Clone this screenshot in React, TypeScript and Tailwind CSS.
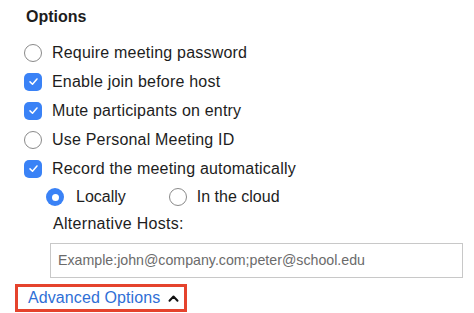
import React from 'react'

const font = { fontFamily: '"Liberation Sans", Arial, sans-serif' }

function Check({ on }: { on: boolean }) {
  return on ? (
    <span className="flex h-[18px] w-[18px] shrink-0 items-center justify-center rounded-[5px] bg-[#3a82f6]">
      <svg width="11" height="11" viewBox="0 0 12 12" fill="none">
        <path d="M2.2 6.4 4.9 9 9.8 3.2" stroke="white" strokeWidth="1.6" strokeLinecap="round" strokeLinejoin="round" />
      </svg>
    </span>
  ) : (
    <span className="block h-[18px] w-[18px] shrink-0 rounded-full border border-[#8a8a8a] bg-white" />
  )
}

function Radio({ on }: { on: boolean }) {
  return on ? (
    <span className="flex h-[18px] w-[18px] shrink-0 items-center justify-center rounded-full bg-[#3a82f6]">
      <span className="block h-[7px] w-[7px] rounded-full bg-white" />
    </span>
  ) : (
    <span className="block h-[18px] w-[18px] shrink-0 rounded-full border border-[#8a8a8a] bg-white" />
  )
}

const options = [
  { label: 'Require meeting password', on: false },
  { label: 'Enable join before host', on: true },
  { label: 'Mute participants on entry', on: true },
  { label: 'Use Personal Meeting ID', on: false },
  { label: 'Record the meeting automatically', on: true },
]

export default function App() {
  return (
    <div className="h-[313px] w-[474px] overflow-hidden bg-white pl-[24px] pt-[7px] text-[#1d1d1d]" style={font}>
      <div className="pl-[2px] text-[16px] font-bold leading-[20px]">Options</div>
      <div className="mt-[11px] flex flex-col">
        {options.map((o) => (
          <div key={o.label} className="flex h-[29px] items-center gap-[10px]">
            <Check on={o.on} />
            <span className="text-[16px] tracking-[0.2px]">{o.label}</span>
          </div>
        ))}
        <div className="flex h-[28px] items-center pl-[22px] text-[16px]">
          <Radio on />
          <span className="ml-[12px]">Locally</span>
          <span className="ml-[43px]">
            <Radio on={false} />
          </span>
          <span className="ml-[10px]">In the cloud</span>
        </div>
        <div className="flex h-[26px] items-center pl-[29px] text-[16px] tracking-[0.3px]">Alternative Hosts:</div>
      </div>
      <div className="ml-[26px] mt-[6px] flex h-[35px] w-[413px] items-center border border-[#c8c8c8] px-[7px] text-[14.2px] text-[#6b6b6b]">
        Example:john@company.com;peter@school.edu
      </div>
      <div className="-ml-[9px] mt-[6px] flex h-[28px] w-[172px] items-center gap-[8px] border-[3px] border-[#e5432d] pl-[10px]">
        <span className="text-[16px] tracking-[0.1px] text-[#2f6fd6]">Advanced Options</span>
        <svg width="11" height="9" viewBox="0 0 11 9" fill="none">
          <path d="M1.5 6.8 5.5 2.5 9.5 6.8" stroke="#111" strokeWidth="2" strokeLinecap="round" strokeLinejoin="round" />
        </svg>
      </div>
    </div>
  )
}
